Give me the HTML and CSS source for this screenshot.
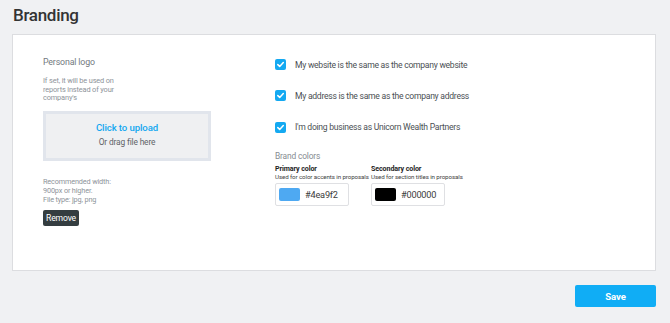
FILE: index.html
```html
<!DOCTYPE html>
<html lang="en">
<head>
    <meta charset="UTF-8">
    <title>Branding</title>
    <link rel="stylesheet" href="styles.css">
</head>
<body>
    <h1 class="page-title">Branding</h1>
    <div class="card">
        <div class="logo-col">
            <div class="section-label">Personal logo</div>
            <p class="hint">If set, it will be used on reports instead of your company's</p>
            <div class="upload-box">
                <div class="upload-link">Click to upload</div>
                <div class="upload-sub">Or drag file here</div>
            </div>
            <p class="hint specs">Recommended width:<br>900px or higher.<br>File type: jpg, png</p>
            <button class="remove-btn">Remove</button>
        </div>
        <div class="options-col">
            <div class="checks">
                <label class="check-row">
                    <span class="check"><svg viewBox="0 0 11 11" width="11" height="11"><path d="M2.8 5.6 4.7 7.4 8.3 3.6" fill="none" stroke="#fff" stroke-width="1.5" stroke-linecap="round" stroke-linejoin="round"/></svg></span>
                    My website is the same as the company website
                </label>
                <label class="check-row">
                    <span class="check"><svg viewBox="0 0 11 11" width="11" height="11"><path d="M2.8 5.6 4.7 7.4 8.3 3.6" fill="none" stroke="#fff" stroke-width="1.5" stroke-linecap="round" stroke-linejoin="round"/></svg></span>
                    My address is the same as the company address
                </label>
                <label class="check-row">
                    <span class="check"><svg viewBox="0 0 11 11" width="11" height="11"><path d="M2.8 5.6 4.7 7.4 8.3 3.6" fill="none" stroke="#fff" stroke-width="1.5" stroke-linecap="round" stroke-linejoin="round"/></svg></span>
                    I'm doing business as Unicorn Wealth Partners
                </label>
            </div>

            <div class="section-label brand-label">Brand colors</div>
            <div class="colors">
                <div class="color-field">
                    <div class="color-title">Primary color</div>
                    <div class="color-desc">Used for color accents in proposals</div>
                    <div class="color-input">
                        <span class="swatch" style="background:#4ea9f2"></span>
                        #4ea9f2
                    </div>
                </div>
                <div class="color-field">
                    <div class="color-title">Secondary color</div>
                    <div class="color-desc">Used for section titles in proposals</div>
                    <div class="color-input">
                        <span class="swatch" style="background:#000000"></span>
                        #000000
                    </div>
                </div>
            </div>
        </div>
    </div>
    <div class="actions">
        <button class="save-btn">Save</button>
    </div>
</body>
</html>
```

FILE: styles.css
```css
* {
    box-sizing: border-box;
}
body {
    margin: 0;
    background-color: #f0f1f3;
    font-family: Roboto, "Liberation Sans", sans-serif;
    color: #555;
}
.page-title {
    margin: 5px 0 0 13px;
    font-size: 17px;
    font-weight: 500;
    line-height: 20px;
    letter-spacing: -0.3px;
    color: #333;
}
.card {
    display: flex;
    margin: 9px 14px 0 12px;
    height: 237px;
    background: #fff;
    border: 1px solid #dcdde0;
    padding: 0 0 0 30px;
}
.logo-col {
    width: 168px;
    padding-top: 22px;
}
.section-label {
    font-size: 8.8px;
    line-height: 10px;
    letter-spacing: -0.15px;
    color: #737980;
}
.hint {
    margin: 10px 0 0;
    width: 76px;
    font-size: 7.4px;
    line-height: 8.7px;
    letter-spacing: -0.15px;
    color: #8e949a;
}
.upload-box {
    margin-top: 8px;
    height: 50px;
    padding-top: 8px;
    border: 3px solid #e1e5ec;
    background: #eff0f2;
    text-align: center;
}
.upload-link {
    font-size: 9.6px;
    line-height: 11px;
    font-weight: 500;
    letter-spacing: -0.1px;
    color: #12a7f0;
}
.upload-sub {
    margin-top: 4px;
    font-size: 8.4px;
    line-height: 10px;
    letter-spacing: -0.15px;
    color: #5f6368;
}
.specs {
    margin-top: 17px;
    width: auto;
    font-size: 7.3px;
}
.remove-btn {
    display: block;
    margin-top: 6px;
    width: 36px;
    height: 16px;
    padding: 0;
    background: #343d40;
    color: #fff;
    border: none;
    border-radius: 2px;
    font-family: Roboto, "Liberation Sans", sans-serif;
    font-size: 8.6px;
    letter-spacing: -0.15px;
}
.options-col {
    margin-left: 64px;
    padding-top: 24px;
}
.checks {
    display: flex;
    flex-direction: column;
    gap: 20.3px;
}
.check-row {
    display: flex;
    align-items: center;
    gap: 9px;
    height: 11px;
    font-size: 8.6px;
    letter-spacing: -0.27px;
    color: #4b4f54;
}
.check {
    display: flex;
    width: 11px;
    height: 11px;
    background: #14a9f1;
    border-radius: 2px;
}
.brand-label {
    margin-top: 18px;
    font-size: 8.4px;
    color: #868c92;
}
.colors {
    display: flex;
    margin-top: 3.6px;
}
.color-field {
    width: 96px;
}
.color-title {
    font-size: 7.1px;
    line-height: 9px;
    font-weight: 700;
    letter-spacing: -0.1px;
    color: #1e1e1e;
}
.color-desc {
    font-size: 6.2px;
    line-height: 8px;
    letter-spacing: -0.1px;
    color: #444;
    white-space: nowrap;
}
.color-input {
    display: flex;
    align-items: center;
    gap: 5px;
    width: 74px;
    height: 23px;
    margin-top: 2px;
    padding: 0 3px;
    border: 1px solid #dfe0e3;
    border-radius: 2px;
    font-size: 9.2px;
    letter-spacing: -0.2px;
    color: #3c3c3c;
}
.swatch {
    width: 21px;
    height: 13px;
    border-radius: 2px;
}
.actions {
    display: flex;
    justify-content: flex-end;
    margin: 14px 14px 0 0;
}
.save-btn {
    width: 81px;
    height: 22px;
    background: #10adf5;
    color: #fff;
    border: none;
    border-radius: 2px;
    font-family: Roboto, "Liberation Sans", sans-serif;
    font-size: 9.6px;
    font-weight: 700;
    letter-spacing: -0.1px;
}
```
